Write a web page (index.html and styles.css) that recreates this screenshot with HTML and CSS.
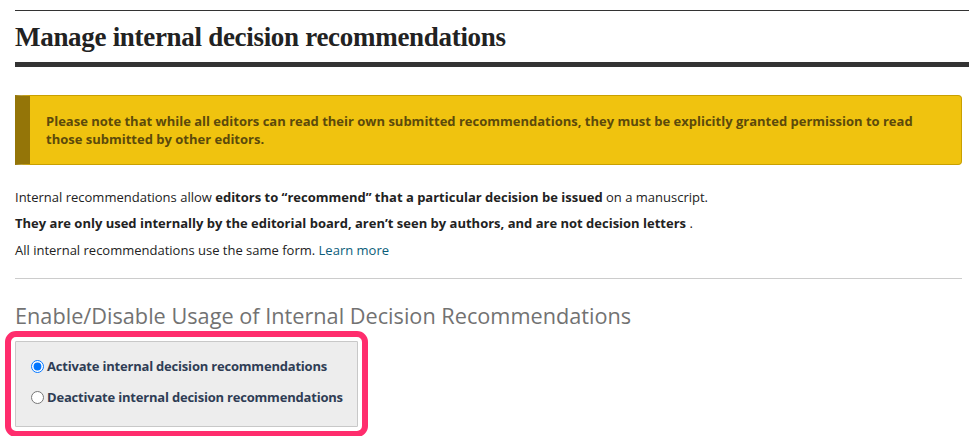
FILE: index.html
```html
<!DOCTYPE html>
<html lang="en">
<head>
<meta charset="utf-8">
<title>Manage internal decision recommendations</title>
<link rel="stylesheet" href="styles.css">
</head>
<body>
<div class="page">
  <header class="page-header">
    <h1 class="page-title">Manage internal decision recommendations</h1>
  </header>

  <div class="notice">
    <p>Please note that while all editors can read their own submitted recommendations, they must be explicitly granted permission to read those submitted by other editors.</p>
  </div>

  <p class="info">Internal recommendations allow <strong>editors to “recommend” that a particular decision be issued</strong> on a manuscript.</p>
  <p class="info"><strong>They are only used internally by the editorial board, aren’t seen by authors, and are not decision letters</strong> .</p>
  <p class="info">All internal recommendations use the same form. <a href="#" class="link">Learn more</a></p>

  <hr class="rule">

  <h2 class="section-title">Enable/Disable Usage of Internal Decision Recommendations</h2>

  <fieldset class="options">
    <label class="option"><input type="radio" name="usage" checked> Activate internal decision recommendations</label>
    <label class="option"><input type="radio" name="usage"> Deactivate internal decision recommendations</label>
  </fieldset>
</div>
</body>
</html>
```
FILE: styles.css
```css
* { box-sizing: border-box; }
html, body { margin: 0; padding: 0; background: #fff; }
html, body { height: 100%; }
body {
  font-family: "Open Sans", "Lato", sans-serif;
  font-size: 13px;
  color: #222;
  overflow: hidden;
}
.page {
  min-height: 100%;
  padding: 10px 7px 20px 15px;
}
.page-header {
  margin-right: -20px;
  border-top: 1px solid #333;
  border-bottom: 5px solid #333;
  padding: 9px 0 8px;
}
.page-title {
  margin: 0;
  font-family: "Liberation Serif", serif;
  font-weight: bold;
  font-size: 27px;
  line-height: 34px;
  letter-spacing: -0.3px;
  color: #222;
}
.notice {
  margin-top: 28px;
  background: #f0c30f;
  border: 1px solid #c9a000;
  border-left: 15px solid #947508;
  border-radius: 0 4px 4px 0;
  padding: 16px 30px 16px 16px;
}
.notice p {
  margin: 0;
  font-weight: bold;
  font-size: 13px;
  line-height: 18px;
  color: #5c4a0b;
}
.info {
  margin: 0;
  line-height: 26px;
}
.info:first-of-type { margin-top: 19px; }
.info:last-of-type { line-height: 28px; }
.info strong { font-weight: bold; }
.link { color: #0b5d7a; text-decoration: none; }
.rule {
  margin: 14px 0 0;
  border: 0;
  border-top: 1px solid #ccc;
}
.section-title {
  margin: 23px 0 0;
  font-weight: 400;
  font-size: 21.7px;
  line-height: 28px;
  color: #727272;
}
.options {
  margin: 11px 0 0;
  width: 343px;
  background: #ededed;
  border: 1px solid #c8c8c8;
  padding: 9px 0 13px 15px;
  outline: 6px solid #ff2d6d;
  outline-offset: 4px;
  border-radius: 1px;
}
.option {
  display: flex;
  align-items: center;
  white-space: nowrap;
  font-weight: bold;
  font-size: 13px;
  letter-spacing: -0.2px;
  line-height: 31px;
  color: #2f3d55;
}
.option input {
  margin: 0 3px 0 0;
  width: 13px;
  height: 13px;
}
```
